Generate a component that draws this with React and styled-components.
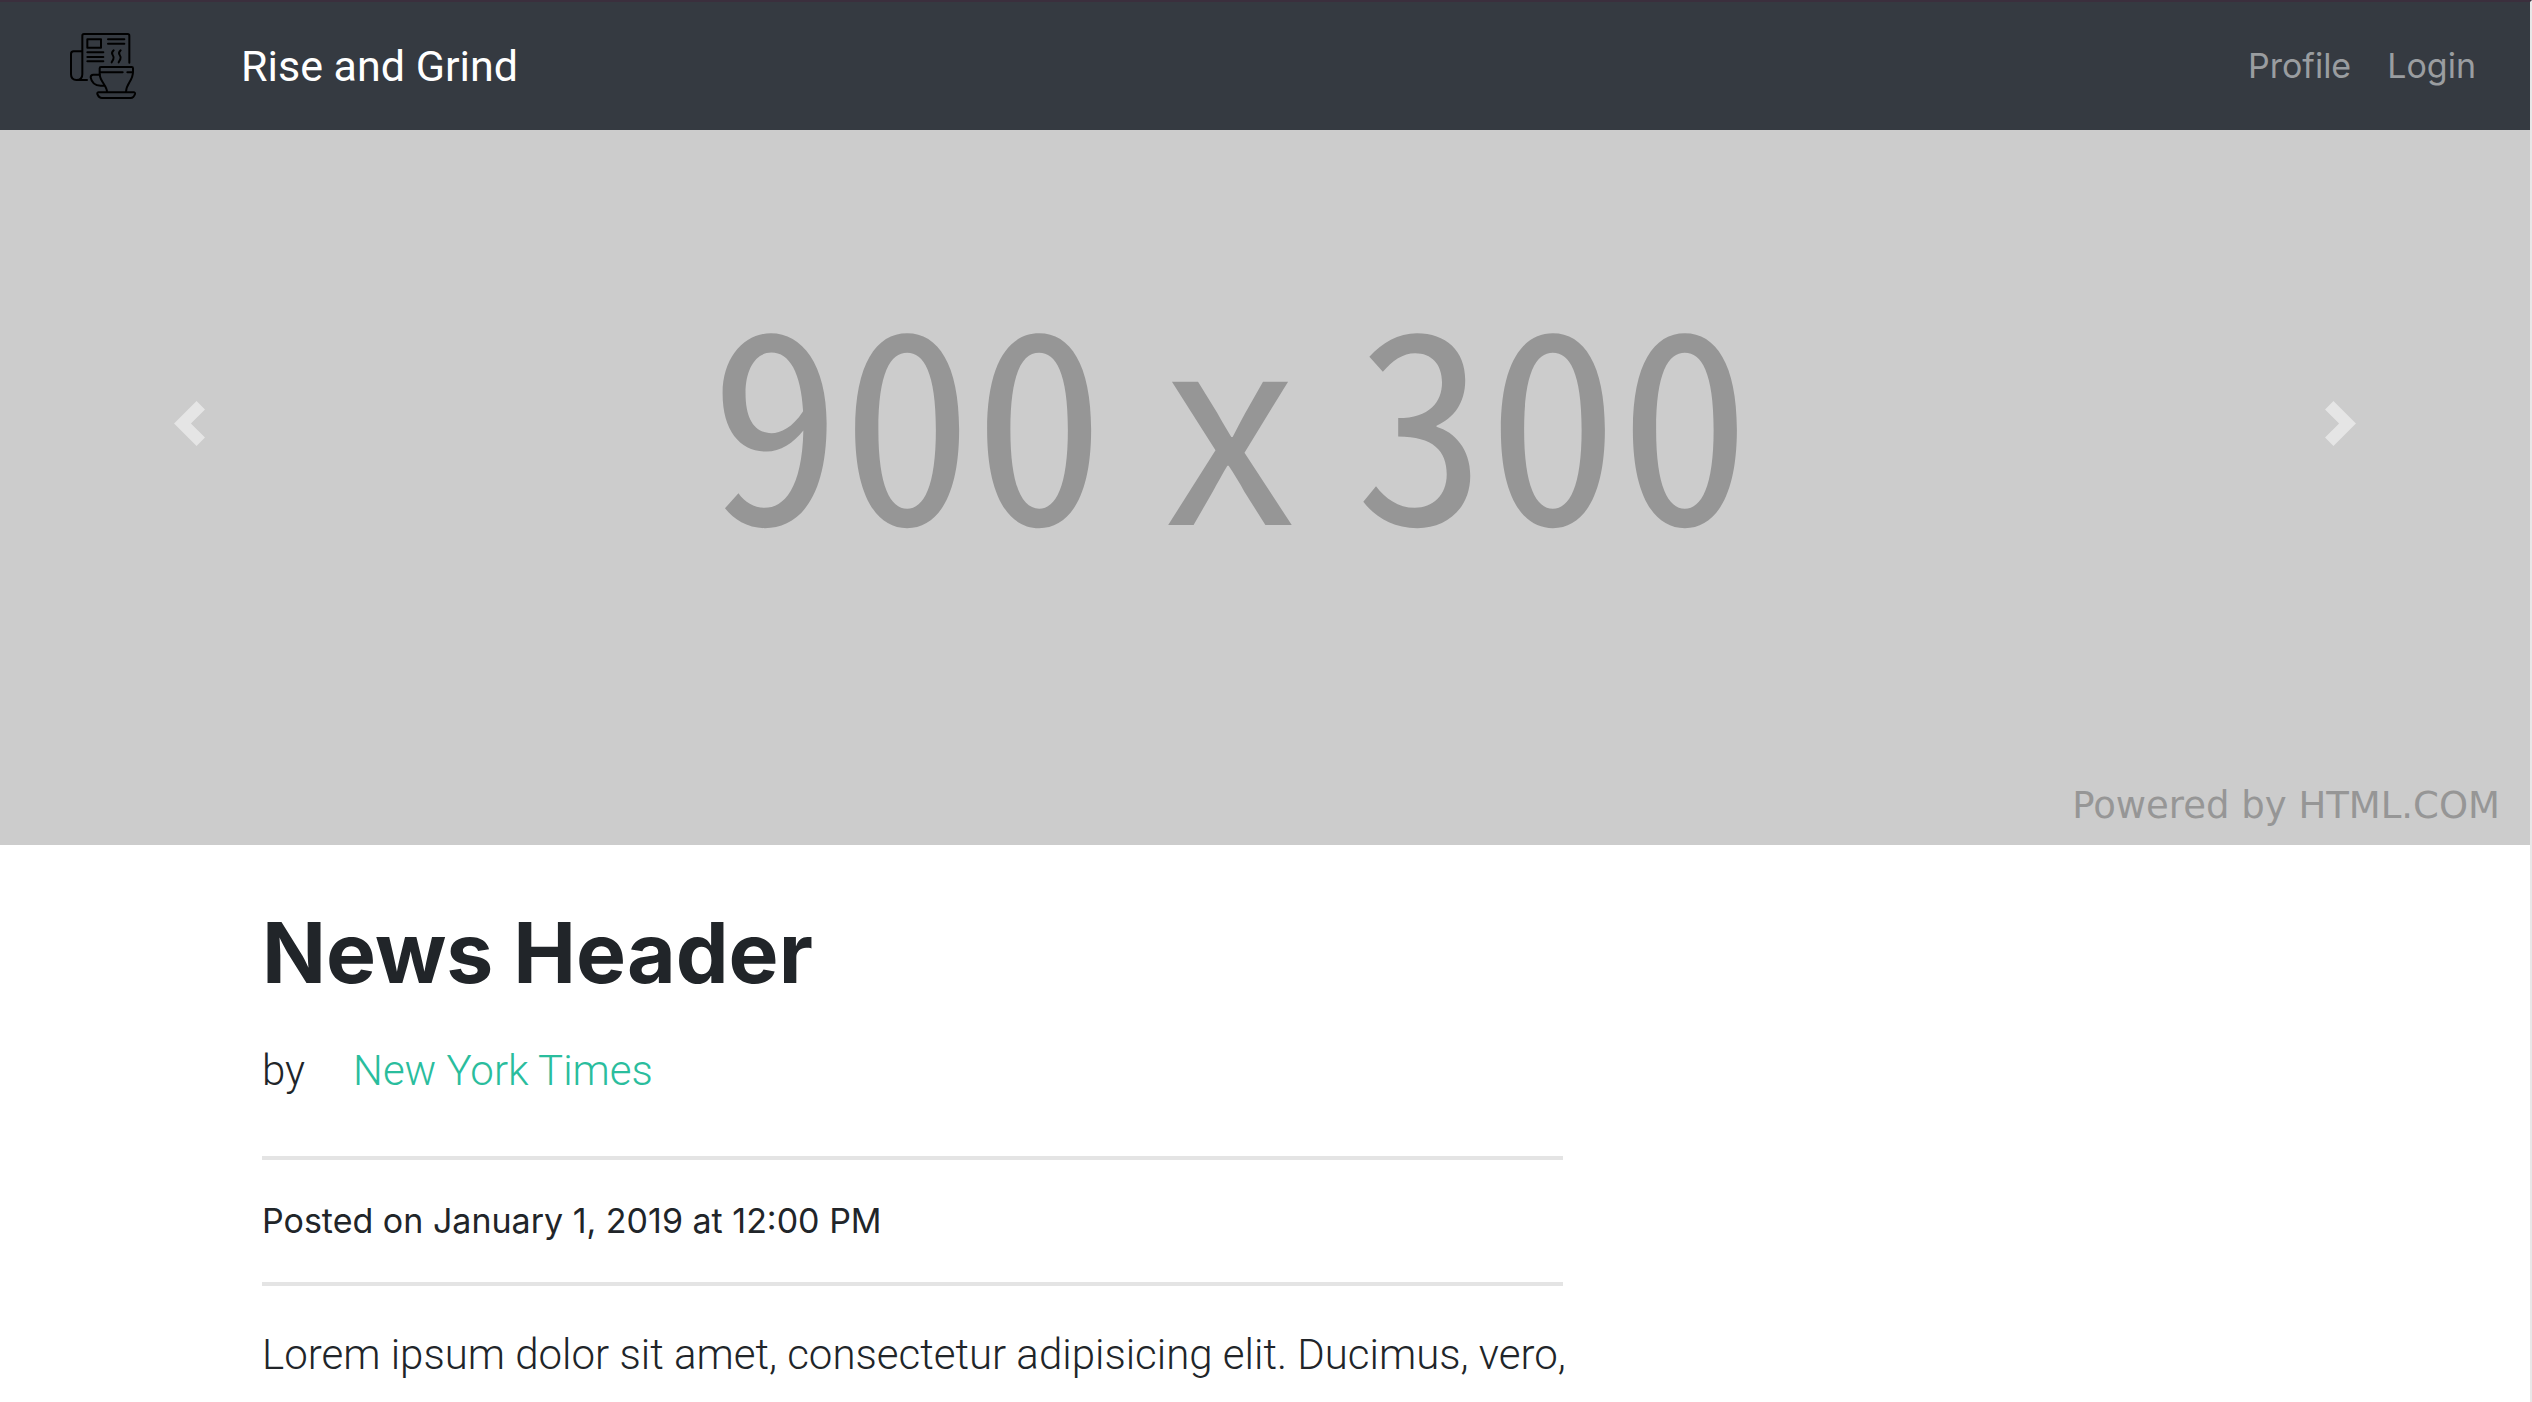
import React from "react";
import styled, { createGlobalStyle } from "styled-components";

const GlobalStyle = createGlobalStyle`
  *, *::before, *::after { box-sizing: border-box; }
  body {
    margin: 0;
    background: #fff;
    color: #212529;
    font-family: Inter, "Liberation Sans", sans-serif;
    font-size: 34px;
    line-height: 52px;
  }
`;

const Page = styled.div`
  min-height: 100vh;
  overflow: hidden;
  border-top: 2px solid #3b2f3d;
  border-right: 2px solid #e8e8e8;
`;

const Navbar = styled.header`
  position: fixed;
  top: 2px;
  left: 0;
  right: 2px;
  z-index: 10;
  display: flex;
  align-items: center;
  height: 128px;
  padding: 0 54px 0 70px;
  background: #353a41;
`;

const Logo = styled.svg`
  width: 66px;
  height: 66px;
  margin-right: 105px;
  fill: none;
  stroke: #000;
  stroke-width: 6;
  stroke-linecap: round;
  stroke-linejoin: round;
`;

const Brand = styled.a`
  color: #fff;
  font-family: Roboto, "Liberation Sans", sans-serif;
  font-size: 43px;
  text-decoration: none;
`;

const Nav = styled.nav`
  display: flex;
  gap: 36px;
  margin-left: auto;
`;

const NavLink = styled.a`
  color: #9a9da0;
  text-decoration: none;
`;

const Carousel = styled.section`
  position: relative;
  aspect-ratio: 3 / 1;
  background: #ccc;
  color: #969696;
`;

const Slide = styled.div`
  display: flex;
  align-items: center;
  justify-content: center;
  height: 100%;
  padding: 0 70px 28px 0;
  font-family: "Noto Sans CJK JP", "Liberation Sans", sans-serif;
  font-size: 264px;
  line-height: 1;
  white-space: pre;
`;

const Digits = styled.span`
  font-feature-settings: "hwid";
`;

const Credit = styled.span`
  position: absolute;
  right: 30px;
  bottom: 13px;
  font-family: "DejaVu Sans", sans-serif;
  font-size: 37px;
`;

const Control = styled.button`
  position: absolute;
  top: 0;
  bottom: 0;
  ${(p) => p.$side}: 0;
  display: flex;
  align-items: center;
  justify-content: center;
  width: 15%;
  padding: 0;
  border: 0;
  background: none;
  opacity: 0.5;
  cursor: pointer;
`;

const Chevron = styled.svg`
  width: 45px;
  height: 45px;
  fill: #fff;
`;

const Container = styled.main`
  display: grid;
  grid-template-columns: minmax(0, 24fr) minmax(0, 13fr);
  max-width: 2006px;
  margin: 0 auto;
  padding-top: 54px;
`;

const Title = styled.h1`
  margin: 0 0 30px;
  font-size: 84px;
  font-weight: 700;
  line-height: 108px;
`;

const Lead = styled.p`
  margin: 0;
  font-family: Roboto, "Liberation Sans", sans-serif;
  font-size: 42px;
  font-weight: 300;
  line-height: 68px;
  white-space: nowrap;
`;

const Byline = styled(Lead)`
  display: flex;
  gap: 48px;
  margin-bottom: 51px;
`;

const SourceLink = styled.a`
  color: #2abd9d;
  text-decoration: none;
`;

const Posted = styled.p`
  margin: 0;
`;

const Rule = styled.hr`
  height: 4px;
  margin: 0 0 35px;
  border: 0;
  background: #e4e4e4;
  ${Posted} + & { margin-top: 35px; }
`;

function CoffeeNewsLogo() {
  return (
    <Logo viewBox="90 102 198 198" aria-hidden="true">
      <path d="M268 191V110q0-5-5-5H132q-5 0-5 5V226q0 17-17 17t-17-17V165q0-8 8-8H126" />
      <path d="M110 243H141" />
      <path d="M142 121H183V146H142Z" />
      <path d="M204 121H253M204 134H253M142 160H190M142 174H190M142 187H190" />
      <path d="M221 154q-8 7-3 14t2 13l-5 9M242 154q-8 7-3 14t2 13l-5 9" />
      <path d="M201 278C200 258 179 247 179 224V208q0-4 4-4H275q4 0 4 4V218C279 246 259 252 258 278" />
      <path d="M181 220H248M262 220H277" />
      <path d="M179 227H160q-8 0-8 8Q156 259 182 260H192" />
      <path d="M176 280H281q5 0 4 5-4 12-13 12H186q-9 0-14-12-1-5 4-5Z" />
    </Logo>
  );
}

export default function App() {
  return (
    <>
      <GlobalStyle />
      <Page>
        <Navbar>
          <CoffeeNewsLogo />
          <Brand href="#">Rise and Grind</Brand>
          <Nav>
            <NavLink href="#profile">Profile</NavLink>
            <NavLink href="#login">Login</NavLink>
          </Nav>
        </Navbar>
        <Carousel>
          <Slide>
            <Digits>900</Digits>
            <span> x </span>
            <Digits>300</Digits>
          </Slide>
          <Credit>Powered by HTML.COM</Credit>
          <Control type="button" $side="left" aria-label="Previous">
            <Chevron viewBox="0 0 8 8">
              <path d="M5.25 0l-4 4 4 4 1.5-1.5-2.5-2.5 2.5-2.5-1.5-1.5z" />
            </Chevron>
          </Control>
          <Control type="button" $side="right" aria-label="Next">
            <Chevron viewBox="0 0 8 8">
              <path d="M2.75 0l-1.5 1.5 2.5 2.5-2.5 2.5 1.5 1.5 4-4-4-4z" />
            </Chevron>
          </Control>
        </Carousel>
        <Container>
          <article>
            <Title>News Header</Title>
            <Byline>
              <span>by</span>
              <SourceLink href="#source">New York Times</SourceLink>
            </Byline>
            <Rule />
            <Posted>Posted on January 1, 2019 at 12:00 PM</Posted>
            <Rule />
            <Lead>
              Lorem ipsum dolor sit amet, consectetur adipisicing elit. Ducimus, vero,
            </Lead>
          </article>
        </Container>
      </Page>
    </>
  );
}
